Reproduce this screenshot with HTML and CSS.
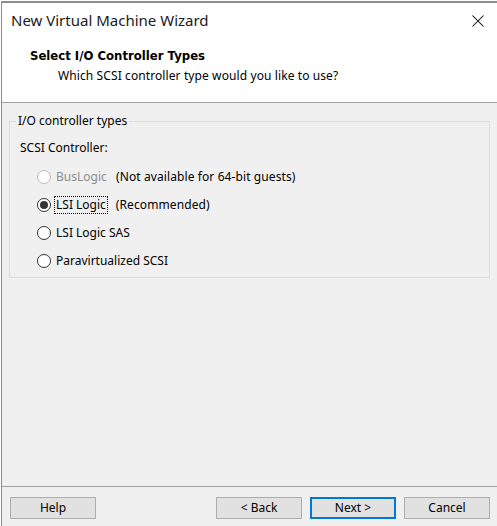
FILE: index.html
```html
<!DOCTYPE html>
<html>
<head>
<meta charset="utf-8">
<link rel="stylesheet" href="styles.css">
</head>
<body>
<div class="window">
  <div class="top">
    <div class="titlebar">
      <span class="title">New Virtual Machine Wizard</span>
      <svg class="close" width="12" height="12" viewBox="0 0 12 12"><path d="M0.5 0.5 L11.5 11.5 M11.5 0.5 L0.5 11.5" stroke="#000" stroke-width="1.05" fill="none"/></svg>
    </div>
    <div class="heading">Select I/O Controller Types</div>
    <div class="subtitle">Which SCSI controller type would you like to use?</div>
  </div>
  <div class="content">
    <fieldset class="group">
      <legend>I/O controller types</legend>
      <div class="caption">SCSI Controller:</div>
      <div class="options">
        <div class="row disabled"><span class="radio"></span><span class="label">BusLogic</span><span class="note">(Not available for 64-bit guests)</span></div>
        <div class="row"><span class="radio checked"></span><span class="label focus">LSI Logic</span><span class="note">(Recommended)</span></div>
        <div class="row"><span class="radio"></span><span class="label">LSI Logic SAS</span></div>
        <div class="row"><span class="radio"></span><span class="label">Paravirtualized SCSI</span></div>
      </div>
    </fieldset>
  </div>
  <div class="footer">
    <button class="btn">Help</button>
    <span class="spacer"></span>
    <button class="btn">&lt; Back</button>
    <button class="btn default">Next &gt;</button>
    <button class="btn">Cancel</button>
  </div>
</div>
</body>
</html>
```
FILE: styles.css
```css
html, body {
  margin: 0;
  padding: 0;
  background: #ffffff;
}
body {
  font-family: "Noto Sans", "Liberation Sans", sans-serif;
  font-size: 12px;
  color: #000;
  width: 497px;
  height: 526px;
  overflow: hidden;
}
.window {
  margin: 1px 0 0 1px;
  height: 525px;
  box-sizing: border-box;
  border-top: 2px solid #8c8c8c;
  border-left: 1px solid #8c8c8c;
  display: flex;
  flex-direction: column;
  background: #f0f0f0;
}
.top {
  height: 99px;
  background: #ffffff;
  border-bottom: 1px solid #a0a0a0;
  flex: none;
}
.titlebar {
  display: flex;
  align-items: center;
  justify-content: space-between;
  padding: 7px 13px 0 9px;
  height: 20px;
}
.title {
  font-size: 15px;
  line-height: 20px;
  color: #1a1a1a;
}
.close {
  display: block;
  margin-top: 1px;
}
.heading {
  font-family: "DejaVu Sans", sans-serif;
  font-weight: bold;
  font-size: 11.7px;
  line-height: 16px;
  margin: 18px 0 0 28px;
}
.subtitle {
  line-height: 16px;
  margin: 4px 0 0 56px;
  letter-spacing: 0.1px;
}
.content {
  flex: 1;
  padding: 10px 7px 0 7px;
}
.group {
  margin: 0;
  border: 1px solid #dcdcdc;
  padding: 0 10px 2px 10px;
  min-width: 0;
}
.group legend {
  padding: 0 2px;
  margin-left: -4px;
  line-height: 16px;
}
.caption {
  line-height: 16px;
  margin-top: 11px;
}
.options {
  margin-top: 7px;
}
.row {
  display: flex;
  align-items: center;
  height: 28px;
  padding-left: 17px;
}
.radio {
  width: 14px;
  height: 14px;
  box-sizing: border-box;
  border: 1px solid #333333;
  border-radius: 50%;
  background: #ffffff;
  margin-right: 3px;
  display: flex;
  align-items: center;
  justify-content: center;
  flex: none;
}
.radio.checked::after {
  content: "";
  width: 8px;
  height: 8px;
  border-radius: 50%;
  background: #333333;
}
.label {
  border: 1px dotted transparent;
  padding: 0 1px;
  line-height: 16px;
  min-width: 58px;
}
.label.focus {
  border-color: #000;
  min-width: 0;
  margin-right: 8px;
}
.disabled .radio {
  border-color: #bcbcbc;
  background: #fcfcfc;
}
.disabled .label {
  color: #8d8d8d;
}
.note {
  line-height: 16px;
  letter-spacing: 0.1px;
}
.footer {
  height: 40px;
  box-sizing: border-box;
  border-top: 1px solid #a0a0a0;
  padding: 10px 7px 0 8px;
  display: flex;
  align-items: flex-start;
  gap: 8px;
  flex: none;
}
.spacer {
  flex: 1;
}
.btn {
  width: 86px;
  height: 22px;
  box-sizing: border-box;
  border: 1px solid #adadad;
  background: #e1e1e1;
  font-family: "Noto Sans", "Liberation Sans", sans-serif;
  font-size: 12px;
  color: #000;
  padding: 0;
  margin: 0;
  line-height: 18px;
}
.btn.default {
  border: 2px solid #0078d7;
}
```
